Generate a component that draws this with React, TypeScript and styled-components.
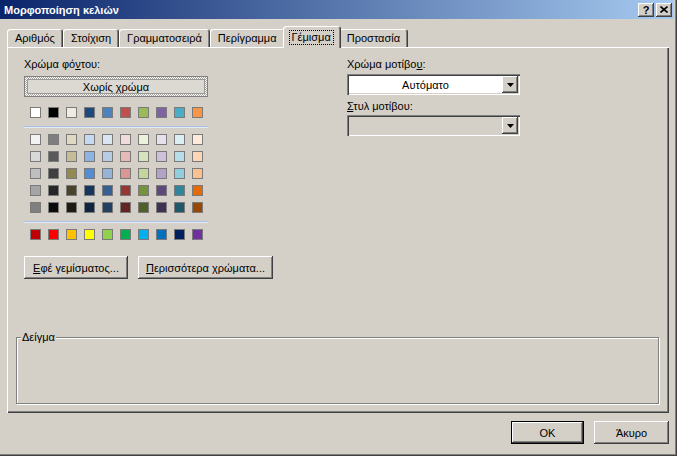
import React from 'react';
import styled, { createGlobalStyle } from 'styled-components';

const GlobalStyle = createGlobalStyle`
  html, body {
    margin: 0;
    padding: 0;
    background: #d4d0c8;
  }
  body {
    font-family: "Liberation Sans", Arial, sans-serif;
    font-size: 11px;
    color: #000;
  }
`;

const topColors = ['#ffffff', '#000000', '#eeece1', '#1f497d', '#4f81bd', '#c0504d', '#9bbb59', '#8064a2', '#4bacc6', '#f79646'];

const shades = [
  ['#f2f2f2', '#7f7f7f', '#ddd9c3', '#c6d9f0', '#dbe5f1', '#f2dcdb', '#ebf1dd', '#e5e0ec', '#dbeef3', '#fdeada'],
  ['#d8d8d8', '#595959', '#c4bd97', '#8db3e2', '#b8cce4', '#e5b9b7', '#d7e3bc', '#ccc1d9', '#b7dde8', '#fbd5b5'],
  ['#bfbfbf', '#3f3f3f', '#938953', '#548dd4', '#95b3d7', '#d99694', '#c3d69b', '#b2a2c7', '#92cddc', '#fac08f'],
  ['#a5a5a5', '#262626', '#494429', '#17365d', '#366092', '#953734', '#76923c', '#5f497a', '#31859b', '#e36c09'],
  ['#7f7f7f', '#0c0c0c', '#1d1b10', '#0f243e', '#244061', '#632423', '#4f6128', '#3f3151', '#205867', '#974806'],
];

const standardColors = ['#c00000', '#ff0000', '#ffc000', '#ffff00', '#92d050', '#00b050', '#00b0f0', '#0070c0', '#002060', '#7030a0'];

const tabs = ['Αριθμός', 'Στοίχιση', 'Γραμματοσειρά', 'Περίγραμμα', 'Γέμισμα', 'Προστασία'];

export default function App() {
  return (
    <>
      <GlobalStyle />
      <Window>
        <TitleBar>
          <Title>Μορφοποίηση κελιών</Title>
          <CaptionButtons>
            <CaptionButton>?</CaptionButton>
            <CaptionButton>
              <svg width="8" height="7" viewBox="0 0 8 7">
                <path d="M0.5 0.5 L7.5 6.5 M7.5 0.5 L0.5 6.5" stroke="#000" strokeWidth="1.6" />
              </svg>
            </CaptionButton>
          </CaptionButtons>
        </TitleBar>

        <Content>
          <TabStrip>
            {tabs.map(t => (
              <Tab key={t} $active={t === 'Γέμισμα'}>
                {t === 'Γέμισμα' ? <Focus>{t}</Focus> : t}
              </Tab>
            ))}
          </TabStrip>

          <Panel>
            <Columns>
              <LeftCol>
                <Label>Χρώμα φό<u>ν</u>του:</Label>
                <NoColor>
                  <NoColorInner>Χωρίς χρώμα</NoColorInner>
                </NoColor>
                <SwatchRow $top={10}>
                  {topColors.map(c => <Swatch key={c} $color={c} />)}
                </SwatchRow>
                <Separator />
                <SwatchGrid>
                  {shades.map((row, i) => (
                    <SwatchRow key={i} $top={0}>
                      {row.map((c, j) => <Swatch key={j} $color={c} />)}
                    </SwatchRow>
                  ))}
                </SwatchGrid>
                <Separator />
                <SwatchRow $top={6}>
                  {standardColors.map(c => <Swatch key={c} $color={c} />)}
                </SwatchRow>
                <ButtonRow>
                  <Button $width={104}><u>Ε</u>φέ γεμίσματος...</Button>
                  <Button $width={135}><u>Π</u>ερισσότερα χρώματα...</Button>
                </ButtonRow>
              </LeftCol>

              <RightCol>
                <Label>Χρώμα μοτίβο<u>υ</u>:</Label>
                <Combo $top={3}>
                  <ComboText>Αυτόματο</ComboText>
                  <ComboArrow>
                    <svg width="7" height="4" viewBox="0 0 7 4"><path d="M0 0 H7 L3.5 4 Z" fill="#000" /></svg>
                  </ComboArrow>
                </Combo>
                <Label $top={5}><u>Σ</u>τυλ μοτίβου:</Label>
                <Combo $top={2} $disabled>
                  <ComboText />
                  <ComboArrow>
                    <svg width="7" height="4" viewBox="0 0 7 4"><path d="M0 0 H7 L3.5 4 Z" fill="#000" /></svg>
                  </ComboArrow>
                </Combo>
              </RightCol>
            </Columns>

            <Spacer />

            <GroupBox>
              <GroupCaption>Δείγμα</GroupCaption>
            </GroupBox>
          </Panel>

          <Footer>
            <Button $width={73} $default>OK</Button>
            <Button $width={75}>Άκυρο</Button>
          </Footer>
        </Content>
      </Window>
    </>
  );
}

const raised = `
  box-shadow: inset -1px -1px 0 #404040, inset 1px 1px 0 #ffffff, inset -2px -2px 0 #808080;
`;

const Window = styled.div`
  width: 677px;
  height: 456px;
  box-sizing: border-box;
  display: flex;
  flex-direction: column;
  background: #d4d0c8;
  padding: 0 3px 3px 0;
  box-shadow: inset -1px -1px 0 #404040, inset -2px -2px 0 #808080;
`;

const TitleBar = styled.div`
  height: 19px;
  flex: none;
  display: flex;
  align-items: center;
  justify-content: space-between;
  padding: 0 2px 0 4px;
  background: linear-gradient(to right, #0a246a, #a6caf0);
`;

const Title = styled.span`
  color: #fff;
  font-weight: bold;
  font-size: 11px;
`;

const CaptionButtons = styled.div`
  display: flex;
  gap: 2px;
`;

const CaptionButton = styled.div`
  width: 16px;
  height: 14px;
  box-sizing: border-box;
  display: flex;
  align-items: center;
  justify-content: center;
  background: #d4d0c8;
  font-weight: bold;
  font-size: 11px;
  line-height: 14px;
  ${raised}
`;

const Content = styled.div`
  flex: 1;
  display: flex;
  flex-direction: column;
  padding: 10px 5px 0 7px;
`;

const TabStrip = styled.div`
  height: 18px;
  display: flex;
  align-items: flex-end;
`;

const Tab = styled.div<{ $active?: boolean }>`
  position: relative;
  z-index: ${p => (p.$active ? 2 : 1)};
  height: ${p => (p.$active ? 22 : 18)}px;
  margin: ${p => (p.$active ? '0 -2px -1px' : '0')};
  padding: ${p => (p.$active ? '3px 8px 0 7px' : '0 8px')};
  box-sizing: border-box;
  line-height: 18px;
  white-space: nowrap;
  background: #d4d0c8;
  border-radius: 3px 3px 0 0;
  box-shadow: inset 1px 1px 0 #ffffff, inset -1px 0 0 #404040, inset -2px 0 0 #808080;
`;

const Focus = styled.span`
  display: inline-block;
  line-height: 13px;
  padding: 0 2px;
  outline: 1px dotted #000;
  vertical-align: 1px;
`;

const Panel = styled.div`
  height: 366px;
  box-sizing: border-box;
  display: flex;
  flex-direction: column;
  box-shadow: inset 1px 1px 0 #ffffff, inset -1px -1px 0 #404040, inset -2px -2px 0 #808080;
`;

const Columns = styled.div`
  display: grid;
  grid-template-columns: 323px 173px;
  padding: 11px 0 0 17px;
`;

const LeftCol = styled.div`
  display: flex;
  flex-direction: column;
  width: 184px;
`;

const RightCol = styled.div`
  display: flex;
  flex-direction: column;
`;

const Label = styled.div<{ $top?: number }>`
  height: 13px;
  line-height: 13px;
  margin-top: ${p => p.$top ?? 0}px;
  white-space: nowrap;
`;

const NoColor = styled.div`
  margin-top: 5px;
  height: 21px;
  box-sizing: border-box;
  border: 1px solid #808080;
  padding: 2px;
  background: repeating-conic-gradient(#ffffff 0 25%, #a8a5a0 0 50%) 0 0 / 2px 2px;
  display: flex;
`;

const NoColorInner = styled.div`
  flex: 1;
  display: flex;
  align-items: center;
  justify-content: center;
  background: #dcd9d2;
  border: 1px solid #9a9894;
`;

const SwatchRow = styled.div<{ $top: number }>`
  display: flex;
  gap: 7px;
  padding-left: 6px;
  margin-top: ${p => p.$top}px;
`;

const SwatchGrid = styled.div`
  display: flex;
  flex-direction: column;
  gap: 6px;
  margin-top: 6px;
`;

const Swatch = styled.span<{ $color: string }>`
  width: 11px;
  height: 11px;
  box-sizing: border-box;
  border: 1px solid #7a7a7a;
  background: ${p => p.$color};
`;

const Separator = styled.div`
  margin-top: 8px;
  height: 1px;
  background: #a9c2e4;
  border-bottom: 1px solid #e4ebf4;
`;

const ButtonRow = styled.div`
  display: flex;
  gap: 10px;
  margin-top: 16px;
`;

const Button = styled.div<{ $width: number; $default?: boolean }>`
  width: ${p => p.$width}px;
  height: 23px;
  flex: none;
  box-sizing: border-box;
  display: flex;
  align-items: center;
  justify-content: center;
  white-space: nowrap;
  background: #d4d0c8;
  border: ${p => (p.$default ? '1px solid #000' : 'none')};
  ${raised}
`;

const Combo = styled.div<{ $top: number; $disabled?: boolean }>`
  margin-top: ${p => p.$top}px;
  height: 21px;
  box-sizing: border-box;
  padding: 2px;
  display: flex;
  background: ${p => (p.$disabled ? '#d4d0c8' : '#ffffff')};
  box-shadow: inset 1px 1px 0 #808080, inset 2px 2px 0 #404040, inset -1px -1px 0 #ffffff, inset -2px -2px 0 #d4d0c8;
`;

const ComboText = styled.div`
  flex: 1;
  display: flex;
  align-items: center;
  justify-content: center;
`;

const ComboArrow = styled.div`
  width: 16px;
  display: flex;
  align-items: center;
  justify-content: center;
  background: #d4d0c8;
  ${raised}
`;

const Spacer = styled.div`
  flex: 1;
`;

const GroupBox = styled.div`
  height: 67px;
  box-sizing: border-box;
  margin: 0 10px 9px 9px;
  padding: 0 4px;
  border: 1px solid #808080;
  box-shadow: 1px 1px 0 #ffffff, inset 1px 1px 0 #ffffff;
`;

const GroupCaption = styled.span`
  display: inline-block;
  margin-top: -7px;
  padding: 0 1px;
  line-height: 13px;
  background: #d4d0c8;
  vertical-align: top;
`;

const Footer = styled.div`
  display: flex;
  justify-content: flex-end;
  gap: 10px;
  padding-top: 8px;
`;
